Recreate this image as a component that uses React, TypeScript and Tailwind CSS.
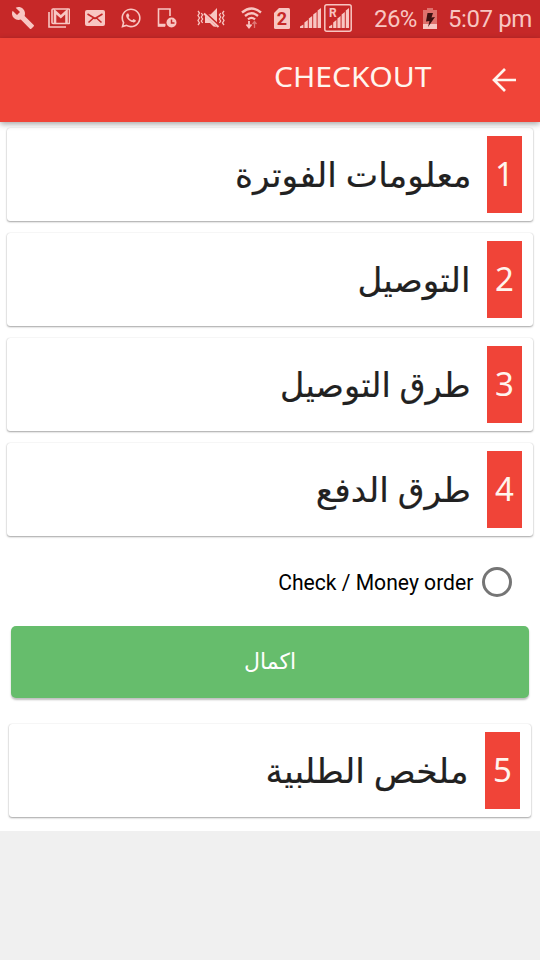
import type { ReactNode } from 'react'
import { MdBuild } from 'react-icons/md'
import { FaWhatsapp } from 'react-icons/fa'

const steps = [
  { number: 1, title: 'معلومات الفوترة', fit: 'scale-x-[1.013]' },
  { number: 2, title: 'التوصيل', fit: 'scale-x-[1.005]' },
  { number: 3, title: 'طرق التوصيل', fit: 'scale-x-[0.984]' },
  { number: 4, title: 'طرق الدفع', fit: 'scale-x-[1.014]' },
]

function StatusBar() {
  return (
    <div dir="ltr" className="flex h-[38px] items-center bg-[#c62828] pb-[2px] pl-[11px] font-['Roboto',sans-serif] text-[#f8c6c2]">
      <MdBuild className="size-6 shrink-0" />

      {/* Gmail */}
      <svg className="ml-[13px] h-5 w-[22px] shrink-0" viewBox="0 0 22 20" fill="none" stroke="currentColor">
        <path d="M1 4v15h17" strokeWidth="1.600" />
        <rect x="4" y="1" width="17.500" height="14.500" rx="1" strokeWidth="1.600" />
        <path d="M7 15V3.500l5.800 5.200 5.700-5.200V15" strokeWidth="2.600" />
      </svg>

      {/* Mail */}
      <svg className="ml-[15px] h-4 w-5 shrink-0" viewBox="0 0 20 16" fill="none">
        <rect width="20" height="16" rx="2" fill="currentColor" />
        <path d="m2.500 4 7.500 4.500L17.500 4M3.500 12.500l5-4.500M16.500 12.500l-5-4.500" stroke="#c62828" strokeWidth="1.600" />
      </svg>

      <FaWhatsapp className="ml-[15px] size-[22px] shrink-0" />

      {/* Device with clock */}
      <svg className="ml-[15px] h-5 w-5 shrink-0" viewBox="0 0 20 20" fill="none" stroke="currentColor">
        <path d="M13 8V1H1.500v17H8" strokeWidth="1.600" />
        <path d="M1 17h7.500" strokeWidth="2.500" />
        <circle cx="14.500" cy="14.500" r="5" fill="currentColor" stroke="none" />
        <path d="M14.500 11.500v3.500h3" stroke="#c62828" strokeWidth="1.500" />
      </svg>

      {/* Vibrate, sound off */}
      <svg className="ml-5 h-5 w-7 shrink-0" viewBox="0 0 28 20" fill="none" stroke="currentColor">
        <path d="M1 3l1.500 2L1 7.500 2.500 10 1 12.500 2.500 15 1 17M4.300 5l1.300 2-1.300 2 1.300 2-1.300 2 1.300 2M27 3l-1.500 2L27 7.500 25.500 10l1.500 2.500-1.500 2.500 1.500 2M23.700 5l-1.300 2 1.300 2-1.300 2 1.300 2-1.300 2" strokeWidth="1.300" />
        <path d="M11 6.500h2.500L20 0v15.500z" fill="currentColor" stroke="none" />
        <path d="M8 7.500v7.500h5l3.500 3.500L20 19z" fill="currentColor" stroke="none" />
        <path d="M8.500 4.500 22 17" stroke="#c62828" strokeWidth="1.300" />
        <path d="M7 5.500 21.500 19" strokeWidth="2" />
      </svg>

      {/* Wifi with traffic arrows */}
      <svg className="ml-[16px] h-[22px] w-[22px] shrink-0" viewBox="0 0 22 22" fill="none" stroke="currentColor">
        <path d="M1 5.500Q10.500-2.500 20 5.500M4 9Q10.500 3.500 17 9M7 12.300Q10.500 9.500 14 12.300" strokeWidth="2.300" />
        <path d="M8 14v6M5.500 17.500l2.500 3 2.500-3" strokeWidth="1.800" />
        <path d="M13.500 21v-6M11.500 17l2-2.500 2 2.500" strokeWidth="1.300" opacity=".5" />
      </svg>

      {/* SIM slot */}
      <svg className="ml-[11px] h-[21px] w-4 shrink-0" viewBox="0 0 16 21">
        <path d="M5 0h9.500Q16 0 16 1.500v18q0 1.500-1.500 1.500h-13Q0 21 0 19.500V5z" fill="currentColor" />
        <text x="8" y="16.800" textAnchor="middle" fontSize="18" fontWeight="700" fill="#c62828">2</text>
      </svg>

      {/* Signal strength */}
      <svg className="ml-[10px] h-5 w-[21px] shrink-0" viewBox="0 0 21 20" fill="currentColor">
        <path d="M0 18.500l3.400-2V20H0zM4.400 14.500l3.400-2.500v8H4.400zM8.800 10.500l3.400-2.500v12H8.800zM13.200 6.500l3.400-2.500v16h-3.400zM17.600 2.500L21 0v20h-3.400z" />
      </svg>
      <svg className="ml-[3px] h-7 w-7 shrink-0" viewBox="0 0 28 28" fill="currentColor">
        <rect x=".8" y=".8" width="26.400" height="26.400" rx="2" fill="none" stroke="currentColor" strokeWidth="1.500" />
        <path d="M5 22.500l3.200-2V24H5zM9.200 18.500l3.200-2.500v8H9.200zM13.400 14.500l3.200-2.500v12h-3.200zM17.600 10.500l3.200-2.500v16h-3.200zM21.800 6.500L25 4v20h-3.200z" />
        <text x="5" y="13" fontSize="12" fontWeight="700">R</text>
      </svg>

      <span className="mt-[2px] ml-[22px] w-[44px] text-[24px] leading-none tracking-[-0.6px] whitespace-nowrap">26%</span>
      {/* Charging battery */}
      <svg className="ml-[5px] h-[21px] w-[14px] shrink-0" viewBox="0 0 14 21">
        <path d="M0 2h4V0h6v2h4v19H0z" fill="#df716d" />
        <path d="M0 16h14v5H0z" fill="#f8c6c2" />
        <path d="M4.500 5H10L8.500 9.500 12 9l-7 10 1.500-6L3 13.500z" fill="#3c1111" />
      </svg>
      <span className="mt-[2px] ml-[11px] text-[24px] leading-none tracking-[-0.4px] whitespace-nowrap">5:07 pm</span>
    </div>
  )
}

function StepCard({ number, title, fit }: { readonly number: number; readonly title: string; readonly fit: string }) {
  return (
    <section className="flex h-[93px] items-center gap-4 rounded-[3px] bg-white pr-[11px] shadow-[0_1px_2px_rgba(0,0,0,0.35),0_0_1px_rgba(0,0,0,0.2)]">
      <div className="flex h-[77px] w-[35px] items-center justify-center bg-[#f04438] text-[33px] text-[#fff5ee]">
        <span className="pb-[2px] leading-none">{number}</span>
      </div>
      <h2
        className={`origin-right pb-[2px] text-[34px] leading-none font-normal whitespace-nowrap text-[#212121] [-webkit-text-stroke:0.2px_#212121] ${fit}`}
      >
        {title}
      </h2>
    </section>
  )
}

function Screen({ children }: { readonly children: ReactNode }) {
  return (
    <div dir="rtl" className="h-[960px] w-[540px] overflow-hidden bg-[#f0f0f0] font-['Noto_Sans','DejaVu_Sans',sans-serif]">
      {children}
    </div>
  )
}

export default function App() {
  return (
    <Screen>
      <StatusBar />

      <header className="relative z-10 flex h-[84px] items-center bg-[#f04438] pr-6 text-[#fff5ee] shadow-[0_2px_6px_rgba(0,0,0,0.36)]">
        <svg className="h-6 w-6" viewBox="0 0 24 24" fill="none" stroke="currentColor" strokeWidth="2.700">
          <path d="M13 1 2 12l11 11M2 12h22" />
        </svg>
        <h1 className="mr-[61px] origin-right scale-x-[1.075] pb-[9px] text-[28px] leading-none font-normal">CHECKOUT</h1>
      </header>

      <main className="h-[709px] bg-white pt-[6px]">
        <div className="flex flex-col gap-3 px-[7px]">
          {steps.map((s) => (
            <StepCard key={s.number} {...s} />
          ))}
        </div>

        {/* Payment method */}
        <label className="mt-[31px] mr-7 flex h-[30px] items-center gap-[9px] font-['Roboto',sans-serif] text-[22px] text-black">
          <span className="size-[30px] rounded-full border-3 border-[#757575]" />
          <span dir="ltr" className="origin-right scale-x-[0.96] pt-px leading-none">Check / Money order</span>
        </label>

        <button className="mx-[11px] mt-[29px] flex h-[72px] w-[518px] items-center justify-center rounded-[5px] bg-[#66bd6c] text-[22px] text-white shadow-[0_2px_2px_rgba(0,0,0,0.25)]">
          <span className="pb-[4px] leading-none">اكمال</span>
        </button>

        <div className="mt-[26px] px-[9px]">
          <StepCard number={5} title="ملخص الطلبية" fit="scale-x-[1.018]" />
        </div>
      </main>
    </Screen>
  )
}
